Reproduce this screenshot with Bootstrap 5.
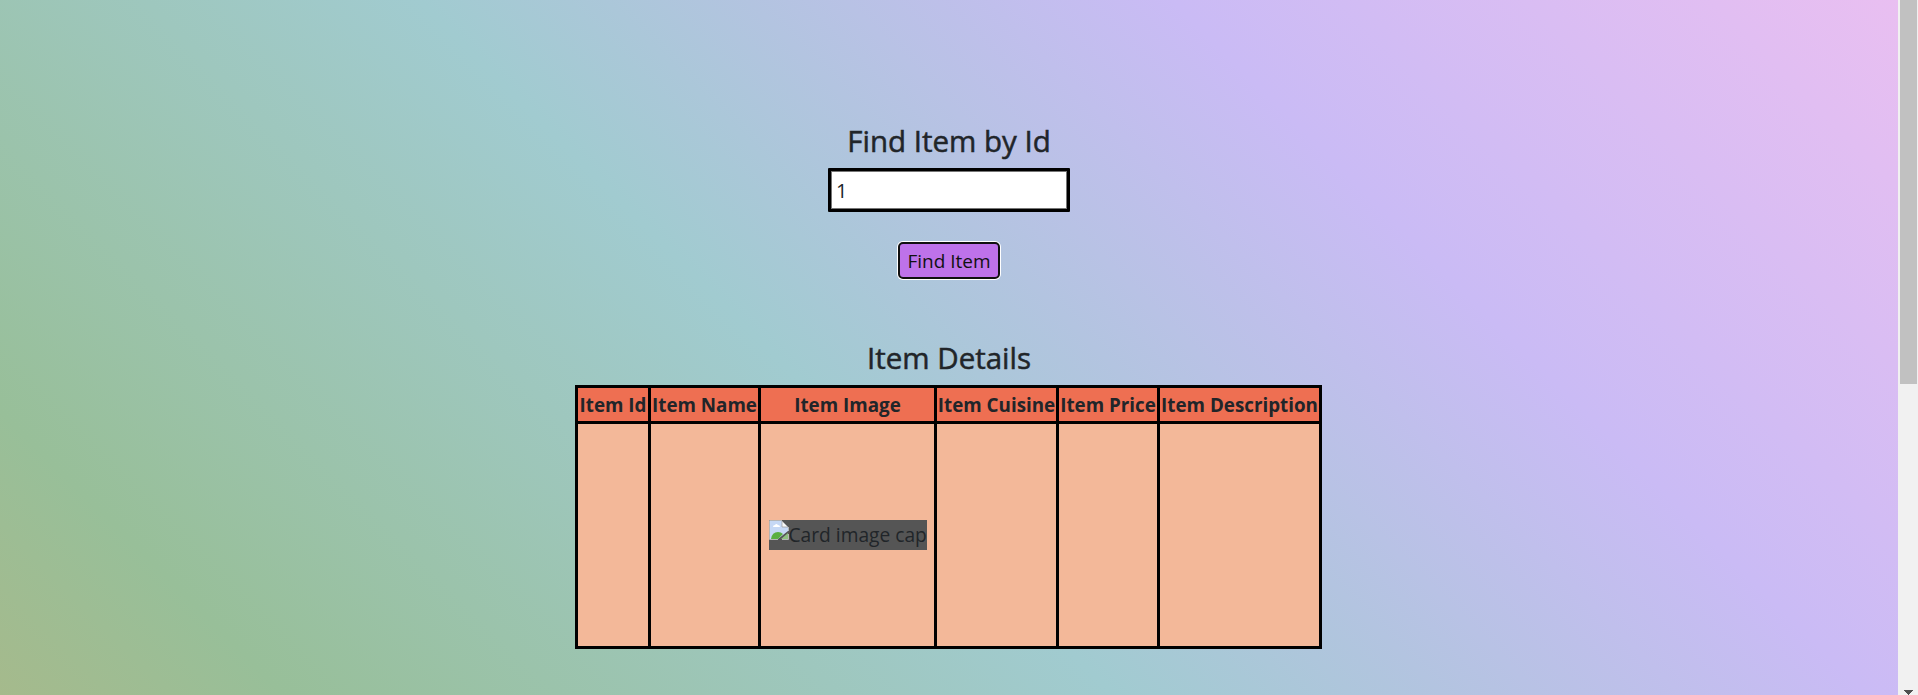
<!DOCTYPE html>
<html lang="en">
<head>
<meta charset="utf-8">
<meta name="viewport" content="width=device-width, initial-scale=1">
<title>Find Item by Id</title>
<link href="https://cdn.jsdelivr.net/npm/bootstrap@5.3.0/dist/css/bootstrap.min.css" rel="stylesheet">
<style>
body{font-family:"Open Sans","Noto Sans",sans-serif;font-size:20px;line-height:30px;color:#212529}
.page-bg{background:linear-gradient(45deg,#a5ba8c 0%,#98bf99 11%,#a1cbd0 43%,#cabbf5 72%,#e9bff1 100%)}
h2{font-size:29.5px;line-height:35px;font-weight:500;white-space:nowrap;-webkit-text-stroke:.5px currentColor}
.find-title{margin:123px 0 10px}
.id-input{width:242px;height:44px;border:3px solid #000;padding:0 5px;box-shadow:inset 0 0 0 1px #767676;font-size:20px;border-radius:1px;outline:0;background:#fff;color:#212529}
.find-btn{width:102px;height:37px;margin-top:30px;border:2px solid #101010;border-radius:5px;background:#be72ea;box-shadow:0 0 0 1px #fff;padding:0;font-size:19px;color:#111}
.details-title{margin:61px 0 10px}
.items{border-collapse:collapse;table-layout:fixed;width:747px;background:#f3b899;margin-right:2px}
.items th,.items td{border:3px solid #000;padding:0;text-align:center;white-space:nowrap}
.items th{height:36px;background:#ee6f52;font-size:18.8px;font-weight:700;padding-left:1px}
.items td{height:225px;vertical-align:middle;padding-left:1px}
.broken{width:158px;height:30px;background:#555;font-size:19.2px}
.scroll-track{width:20px;background:#f1f1f1;padding-left:2px}
.scroll-thumb{width:17px;height:384px;background:#c1c1c1}
</style>
</head>
<body class="vh-100 overflow-hidden d-flex">
<main class="page-bg flex-grow-1 d-flex flex-column align-items-center">
<h2 class="find-title"><span>Find Item by Id</span></h2>
<input class="id-input" value="1" aria-label="Item id">
<button class="find-btn">Find Item</button>
<h2 class="details-title"><span>Item Details</span></h2>
<table class="items">
<colgroup><col style="width:73px"><col style="width:110px"><col style="width:176px"><col style="width:122px"><col style="width:101px"><col style="width:162px"></colgroup>
<thead><tr><th>Item Id</th><th>Item Name</th><th>Item Image</th><th>Item Cuisine</th><th>Item Price</th><th>Item Description</th></tr></thead>
<tbody><tr><td></td><td></td><td><div class="broken d-flex mx-auto"><svg class="flex-shrink-0" width="20" height="20" viewBox="0 0 20 20"><path d="M1 1h12l6 6v4L9 19H1z" fill="#c6d8f5"/><path d="M2 19q1-7 7-7 3 0 5 2l-5 5z" fill="#5aaf40"/><path d="M12 19l7-6v6z" fill="#8fbf80"/><path d="M4 7q0-2 2-2 1-2 3 0 2 0 2 2z" fill="#fff"/><path d="M13 1l6 6h-6z" fill="#f8f8f8" stroke="#999" stroke-width=".7"/><path d="M13 .5H.5v19H9M19.500 7v4M19.500 14v5.500H13" fill="none" stroke="#b5b5b5"/></svg><span>Card image cap</span></div></td><td></td><td></td><td></td></tr></tbody>
</table>
</main>
<aside class="scroll-track d-flex flex-column justify-content-between flex-shrink-0"><div class="scroll-thumb"></div><svg width="17" height="5" viewBox="0 0 17 5"><path d="M4 0h9v1h-1v1h-1v1h-1v1h-1v1H8V4H7V3H6V2H5V1H4z" fill="#505050"/></svg></aside>
<script src="https://cdn.jsdelivr.net/npm/bootstrap@5.3.0/dist/js/bootstrap.bundle.min.js"></script>
</body>
</html>
